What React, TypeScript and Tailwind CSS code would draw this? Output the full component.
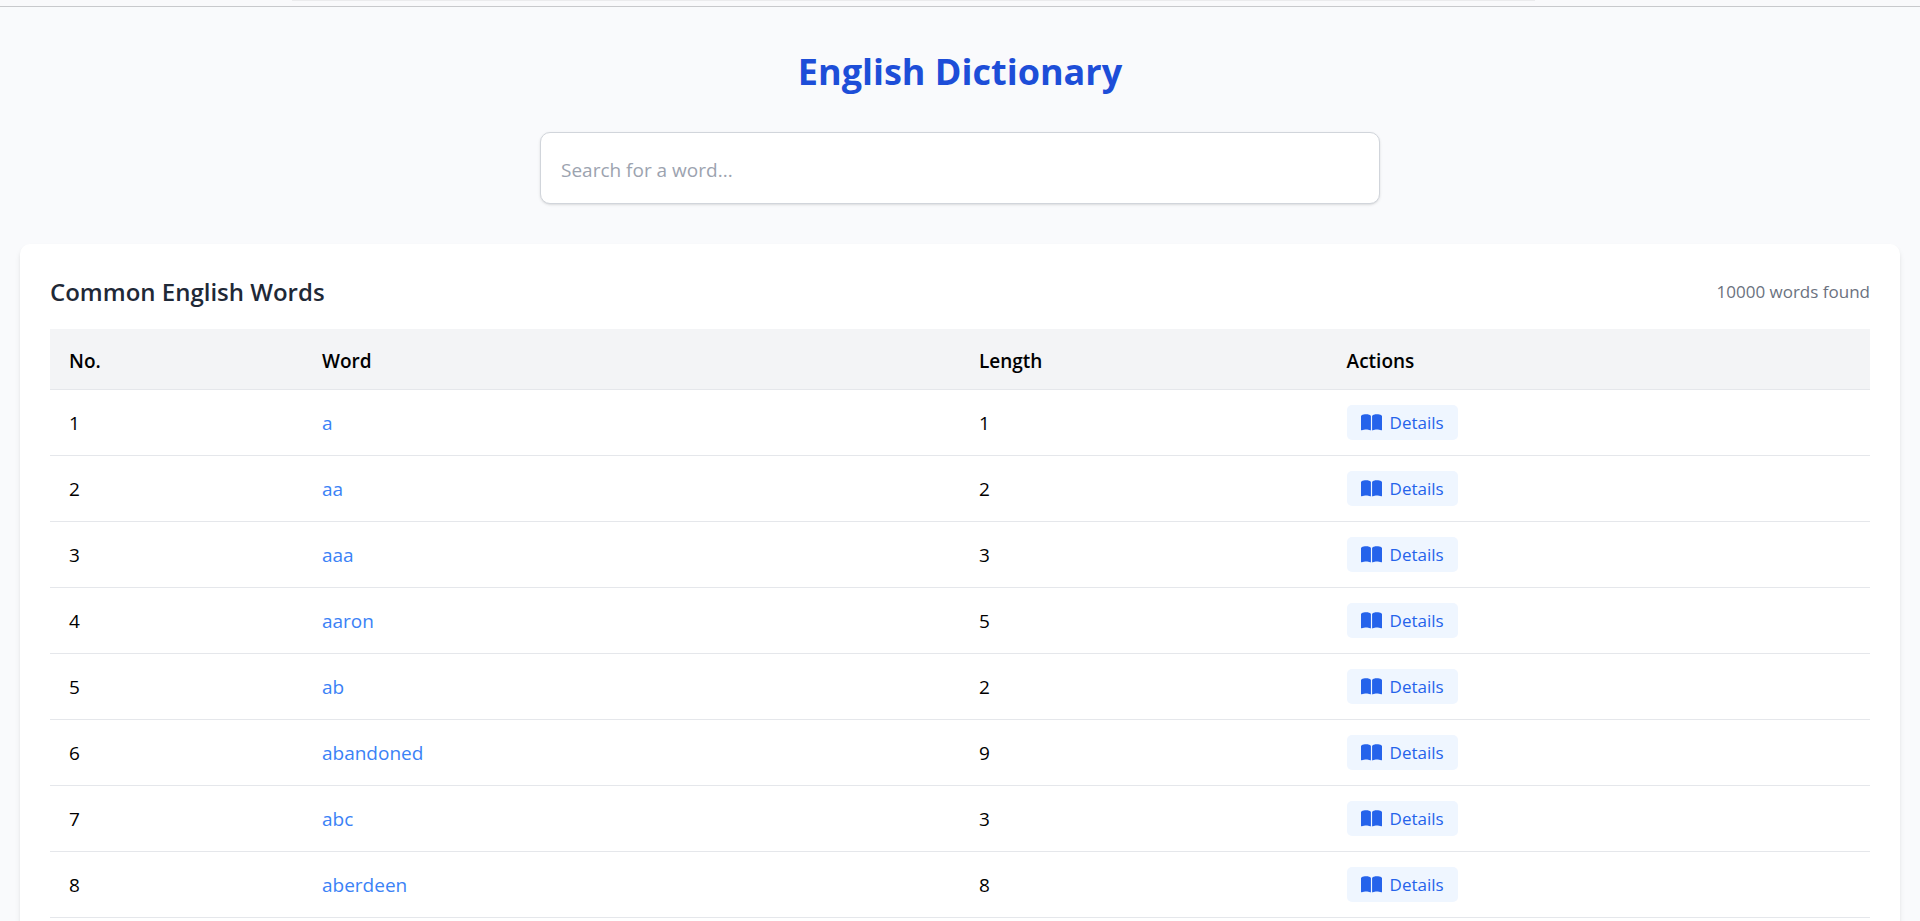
import { useState } from "react";
import { FaBookOpen } from "react-icons/fa6";

const WORDS = ["a", "aa", "aaa", "aaron", "ab", "abandoned", "abc", "aberdeen"];
const TOTAL = 10000;

export default function App() {
  const [query, setQuery] = useState("");

  const q = query.trim().toLowerCase();
  const rows = WORDS.filter((w) => w.includes(q));
  const found = q ? rows.length : TOTAL;

  return (
    <div className="min-h-screen bg-[#f9fafc] font-['Open_Sans',sans-serif] text-black">
      {/* top strip */}
      <div className="h-[7px] border-b border-[#c8c9cc] bg-[#f9f9fb]">
        <div className="ml-[292px] mr-[385px] h-px bg-[#ebebed]" />
      </div>

      <main className="px-5 pt-10">
        <h1 className="text-center text-[36px] leading-[50px] font-bold text-[#1d4ed8]">
          English Dictionary
        </h1>

        <div className="mx-auto mt-[35px] max-w-[840px]">
          <input
            type="text"
            aria-label="Search for a word"
            placeholder="Search for a word..."
            value={query}
            onChange={(e) => setQuery(e.target.value)}
            className="block h-[72px] w-full rounded-[10px] border border-[#d1d5db] bg-white px-5 pt-1 text-[19px] shadow-sm outline-none placeholder:text-[#9ca3af] focus:border-[#3b82f6]"
          />
        </div>

        <section className="mt-10 rounded-[10px] bg-white p-[30px] shadow-md">
          <div className="mb-[19px] flex h-9 items-center justify-between">
            <h2 className="text-[24px] font-semibold text-[#1f2937]">Common English Words</h2>
            <span className="text-[17px] text-[#6b7280]">{found} words found</span>
          </div>

          <table className="w-full table-fixed border-separate border-spacing-0 text-left text-[19px]">
            <thead>
              <tr className="h-[61px] bg-[#f3f4f6]">
                <th className="w-[13.9%] border-b border-[#e5e7eb] px-[19px] pt-1 font-semibold">No.</th>
                <th className="w-[36.1%] border-b border-[#e5e7eb] px-[19px] pt-1 font-semibold">Word</th>
                <th className="w-[20.2%] border-b border-[#e5e7eb] px-[19px] pt-1 font-semibold">Length</th>
                <th className="border-b border-[#e5e7eb] px-[19px] pt-1 font-semibold">Actions</th>
              </tr>
            </thead>
            <tbody>
              {rows.map((word) => (
                <tr key={word} className="h-[66px]">
                  <td className="border-b border-[#e5e7eb] px-[19px] pt-0.5">{WORDS.indexOf(word) + 1}</td>
                  <td className="border-b border-[#e5e7eb] px-[19px] pt-0.5">
                    <a href={`#${word}`} className="text-[#3b82f6] hover:underline">
                      {word}
                    </a>
                  </td>
                  <td className="border-b border-[#e5e7eb] px-[19px] pt-0.5">{word.length}</td>
                  <td className="border-b border-[#e5e7eb] px-[19px]">
                    <button
                      type="button"
                      className="flex h-[35px] items-center gap-2 rounded-[5px] bg-[#eff6ff] px-[14px] text-[17px] text-[#2563eb] hover:bg-[#dbeafe]"
                    >
                      <FaBookOpen size={21} />
                      Details
                    </button>
                  </td>
                </tr>
              ))}
            </tbody>
          </table>
        </section>
      </main>
    </div>
  );
}
